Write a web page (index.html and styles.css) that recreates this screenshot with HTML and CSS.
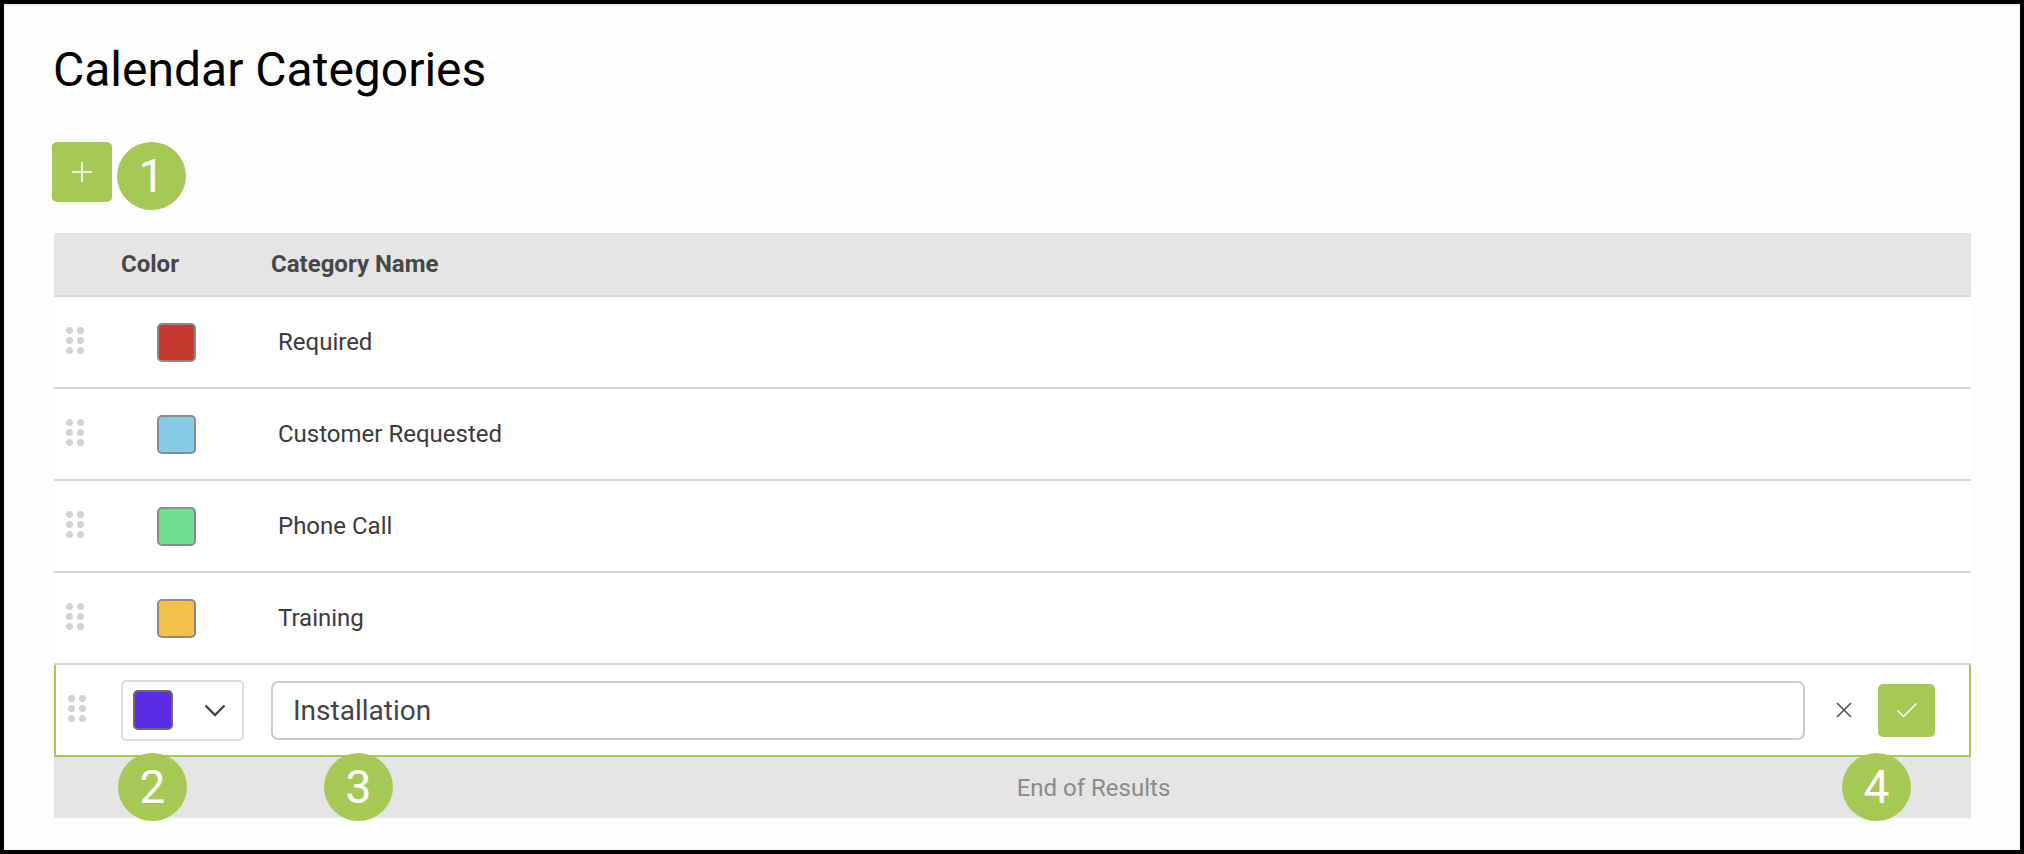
FILE: index.html
```html
<!DOCTYPE html>
<html lang="en">
<head>
<meta charset="utf-8">
<title>Calendar Categories</title>
<link rel="stylesheet" href="styles.css">
</head>
<body>
<div class="frame">
  <div class="page">
    <h1 class="title">Calendar Categories</h1>
    <div class="toolbar">
      <button class="add-btn" type="button" aria-label="Add">
        <svg width="22" height="22" viewBox="0 0 22 22"><path d="M11 1v20M1 11h20" stroke="#fff" stroke-width="1.6" fill="none"/></svg>
      </button>
    </div>

    <div class="table">
      <div class="thead">
        <div></div>
        <div class="th">Color</div>
        <div class="th">Category Name</div>
        <div></div>
      </div>

      <div class="row">
        <div class="handle"><span></span><span></span><span></span><span></span><span></span><span></span></div>
        <div class="color-cell"><span class="swatch" style="background:#c43a31"></span></div>
        <div class="name">Required</div>
        <div></div>
      </div>
      <div class="row">
        <div class="handle"><span></span><span></span><span></span><span></span><span></span><span></span></div>
        <div class="color-cell"><span class="swatch" style="background:#86cbe6"></span></div>
        <div class="name">Customer Requested</div>
        <div></div>
      </div>
      <div class="row">
        <div class="handle"><span></span><span></span><span></span><span></span><span></span><span></span></div>
        <div class="color-cell"><span class="swatch" style="background:#6ee08f"></span></div>
        <div class="name">Phone Call</div>
        <div></div>
      </div>
      <div class="row">
        <div class="handle"><span></span><span></span><span></span><span></span><span></span><span></span></div>
        <div class="color-cell"><span class="swatch" style="background:#f3c04a"></span></div>
        <div class="name">Training</div>
        <div></div>
      </div>

      <div class="row edit-row">
        <div class="handle"><span></span><span></span><span></span><span></span><span></span><span></span></div>
        <div class="color-cell edit">
          <div class="color-select">
            <span class="swatch swatch-edit" style="background:#5b2be6"></span>
            <svg class="chevron" width="22" height="13" viewBox="0 0 22 13"><path d="M1.5 1.5 11 11 20.5 1.5" stroke="#444" stroke-width="2.4" fill="none"/></svg>
          </div>
        </div>
        <div class="input-cell">
          <div class="text-input">Installation</div>
        </div>
        <div class="actions">
          <svg class="cancel" width="16" height="16" viewBox="0 0 16 16"><path d="M1 1 15 15M15 1 1 15" stroke="#555" stroke-width="1.6" fill="none"/></svg>
          <button class="save-btn" type="button" aria-label="Save">
            <svg width="22" height="16" viewBox="0 0 22 16"><path d="M1.5 8.5 7.5 14.5 20.5 1.5" stroke="#fff" stroke-width="1.5" fill="none"/></svg>
          </button>
        </div>
      </div>

      <div class="tfoot">End of Results</div>
    </div>

    <span class="marker m1">1</span>
    <span class="marker m2">2</span>
    <span class="marker m3">3</span>
    <span class="marker m4">4</span>
  </div>
</div>
</body>
</html>
```

FILE: styles.css
```css
* { box-sizing: border-box; }

html, body {
  margin: 0;
  padding: 0;
  background: #fff;
}

body {
  font-family: Roboto, "Liberation Sans", Arial, sans-serif;
  color: #333;
}

.frame {
  width: 2024px;
  height: 854px;
  border: 4px solid #000;
  background: #fdfdfd;
}

.page {
  position: relative;
  height: 100%;
  border-top: 2px solid #eceeee;
  padding: 0 49px 0 48px;
}

.title {
  margin: 36px 0 44px 1px;
  font-size: 48px;
  line-height: 56px;
  font-weight: 400;
  color: #000;
}

.toolbar {
  display: flex;
  height: 60px;
}

.add-btn {
  width: 60px;
  height: 60px;
  border: 0;
  border-radius: 5px;
  background: #a6c956;
  display: flex;
  align-items: center;
  justify-content: center;
  padding: 0;
}

.table {
  margin: 31px 0 0 2px;
  background: #fff;
}

.thead {
  display: grid;
  grid-template-columns: 67px 150px 1fr auto;
  align-items: center;
  height: 64px;
  background: #e5e5e5;
  border-bottom: 2px solid #d9d9d9;
}

.th {
  font-weight: 700;
  font-size: 24px;
  color: #474747;
}

.row {
  display: grid;
  grid-template-columns: 67px 150px 1fr auto;
  align-items: center;
  height: 92px;
  border-bottom: 2px solid #d6d6d6;
}

.handle {
  display: grid;
  grid-template-columns: 7px 7px;
  grid-auto-rows: 7px;
  gap: 3px 4px;
  padding-left: 12px;
  margin-top: -4px;
}

.handle span {
  width: 7px;
  height: 7px;
  border-radius: 50%;
  background: #d2d2d2;
}

.color-cell {
  display: flex;
  align-items: center;
}

.swatch {
  display: block;
  width: 39px;
  height: 39px;
  margin-left: 36px;
  border: 2px solid #8a8a8a;
  border-radius: 5px;
}

.name {
  padding-left: 7px;
  font-size: 24px;
  color: #3a3a3a;
}

.edit-row {
  grid-template-columns: 65px 150px 1fr auto;
  height: 92px;
  border: 2px solid #a6c956;
  border-top: 0;
}

.color-select {
  display: flex;
  align-items: center;
  width: 123px;
  height: 61px;
  border: 2px solid #dcdcdc;
  border-radius: 5px;
  padding-left: 10px;
}

.swatch-edit {
  margin-left: 0;
  width: 40px;
  height: 40px;
  border-color: #6a6a6a;
}

.chevron {
  margin-left: 31px;
}

.input-cell {
  padding-right: 31px;
}

.text-input {
  height: 59px;
  border: 2px solid #cccccc;
  border-radius: 7px;
  padding-left: 20px;
  display: flex;
  align-items: center;
  font-size: 28px;
  color: #444;
  background: #fff;
}

.actions {
  display: flex;
  align-items: center;
  padding-right: 34px;
}

.cancel {
  margin-right: 26px;
}

.save-btn {
  width: 57px;
  height: 53px;
  border: 0;
  border-radius: 5px;
  background: #a6c956;
  display: flex;
  align-items: center;
  justify-content: center;
  padding: 0;
}

.tfoot {
  height: 61px;
  background: #e5e5e5;
  display: flex;
  align-items: center;
  justify-content: center;
  padding-left: 162px;
  font-size: 24px;
  color: #8a8a8a;
}

.marker {
  position: absolute;
  width: 69px;
  height: 68px;
  border-radius: 50%;
  background: #a6c956;
  color: #fff;
  font-size: 46px;
  line-height: 68px;
  text-align: center;
}

.m1 { left: 113px; top: 136px; }
.m2 { left: 114px; top: 747px; }
.m3 { left: 320px; top: 747px; }
.m4 { left: 1838px; top: 747px; }
```
